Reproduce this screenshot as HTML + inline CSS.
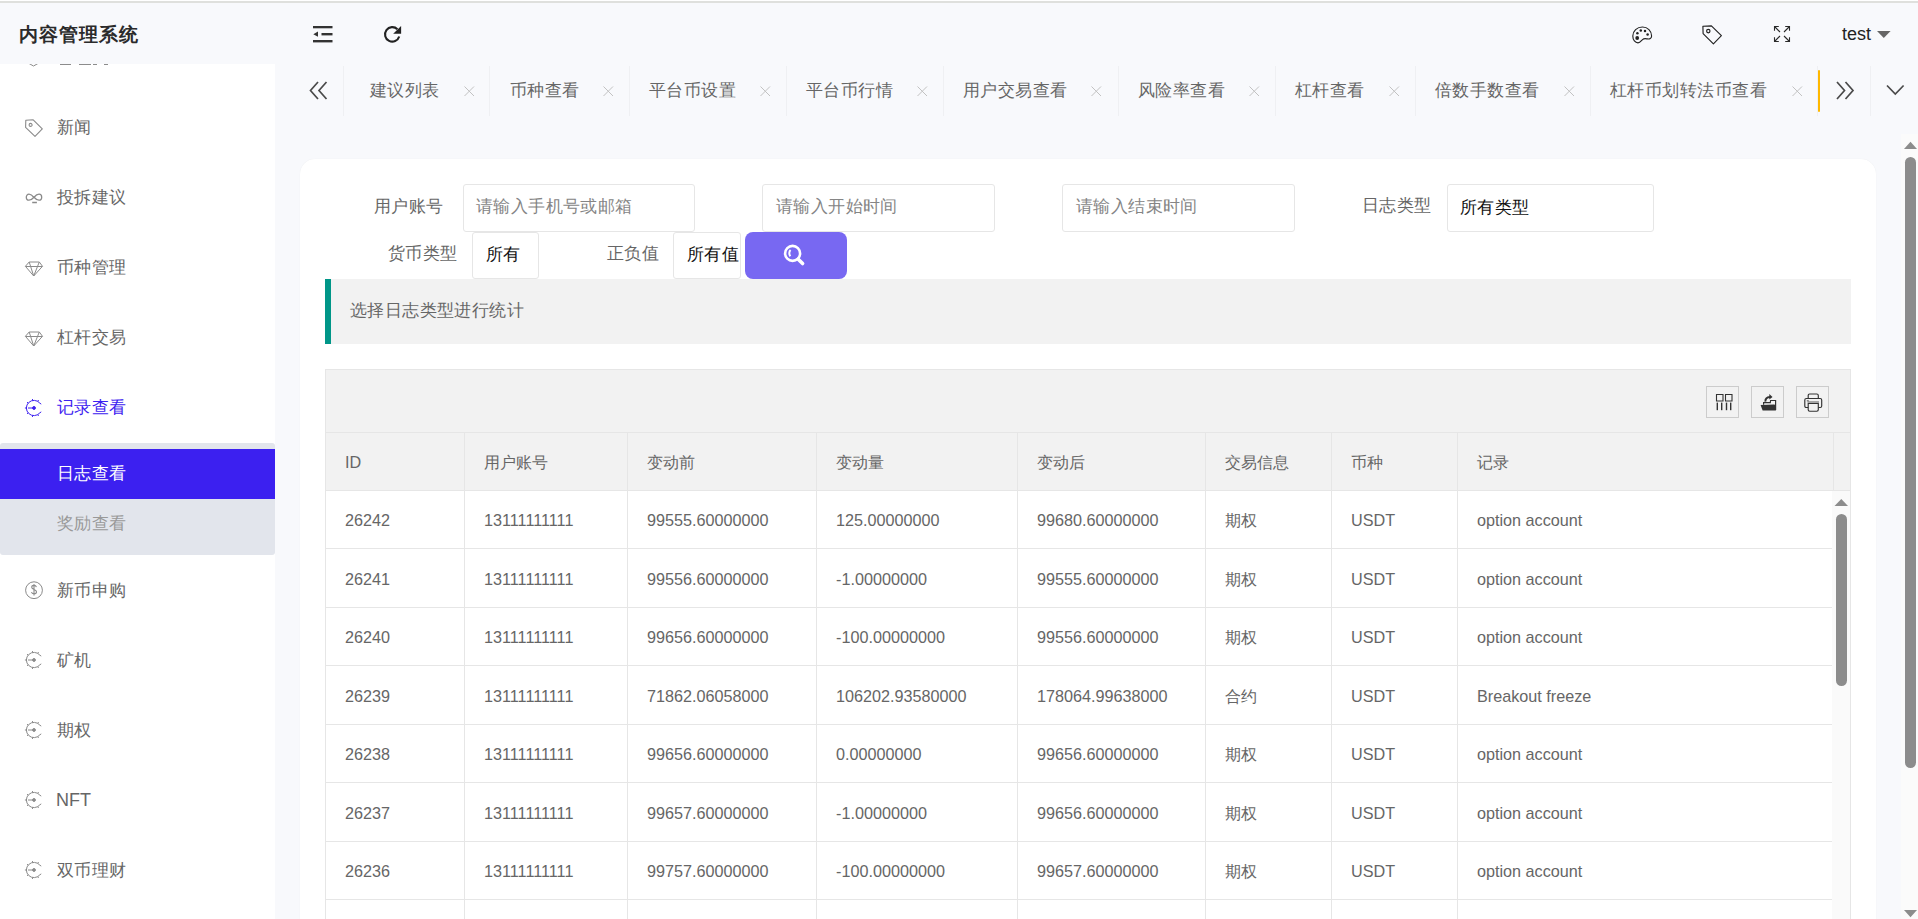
<!DOCTYPE html>
<html><head><meta charset="utf-8">
<style>
*{box-sizing:border-box;margin:0;padding:0}
html,body{width:1918px;height:919px;overflow:hidden;background:#f8f9fc;font-family:"Liberation Sans",sans-serif}
.a{position:absolute}
.t{position:absolute;white-space:nowrap;line-height:1}
svg{position:absolute;overflow:visible}
</style></head><body>
<!-- top line -->
<div class="a" style="left:0;top:0;width:1918px;height:1px;background:#fff"></div>
<div class="a" style="left:0;top:1px;width:1918px;height:2px;background:#dfe0dd"></div>
<!-- header -->
<div class="a" style="left:0;top:3px;width:1918px;height:61px;background:#f8f9fc"></div>
<div class="t" style="left:19px;top:25px;font-size:19px;letter-spacing:1px;font-weight:bold;color:#2b2b2b">内容管理系统</div>
<!-- header icons -->
<svg style="left:313px;top:26px" width="20" height="17" viewBox="0 0 20 17"><rect x="0" y="0" width="19.5" height="2.3" fill="#333"/><rect x="8.5" y="7" width="11" height="2.4" fill="#333"/><rect x="0" y="14" width="19.5" height="2.4" fill="#333"/><path d="M0.3,8.2 L5,5.6 L5,10.8 Z" fill="#333"/></svg>
<svg style="left:383px;top:25px" width="20" height="19" viewBox="0 0 20 19" fill="none"><path d="M16.23,11.52 A7.25,7.25 0 1 1 14.43,4.27" stroke="#222" stroke-width="2.1"/><path d="M18.1,0.9 L18.1,8.7 L10.2,8.7 Z" fill="#222"/></svg>
<svg style="left:1632px;top:26px" width="21" height="18" viewBox="0 0 21 18" fill="none" stroke="#222" stroke-width="1.15"><path d="M10.5,1 C5,1 0.8,4.8 0.8,10 C0.8,14.2 3.3,16.8 6,16.8 C8.2,16.8 9,15 10.5,13.6 C12,12.2 13.5,12.6 15.3,12.9 C17.6,13.3 19.6,12.6 19.6,10 C19.6,4.8 15.6,1 10.5,1 Z" stroke-linejoin="round"/><g fill="#222" stroke="none"><circle cx="5.2" cy="12" r="1.9"/><circle cx="5.4" cy="7.2" r="1.25"/><circle cx="8.8" cy="4.4" r="1.25"/><circle cx="13" cy="4.9" r="1.25"/><circle cx="15.6" cy="8.4" r="1.25"/></g></svg>
<svg style="left:1702px;top:25px" width="21" height="20" viewBox="0 0 21 20" fill="none" stroke="#222" stroke-width="1.15"><path d="M0.9,1.2 L9.4,0.9 L19.4,10.6 L11.4,18.8 L1.1,8.6 Z" stroke-linejoin="round"/><circle cx="6.3" cy="6.1" r="1.7"/></svg>
<svg style="left:1773px;top:25px" width="18" height="18" viewBox="0 0 18 18" fill="none" stroke="#2a2a2a" stroke-width="1.1"><path d="M1.5,5.8 L1.5,1.5 L5.8,1.5 M1.5,1.5 L7,7 M16.5,5.8 L16.5,1.5 L12.2,1.5 M16.5,1.5 L11,7 M1.5,12.2 L1.5,16.5 L5.8,16.5 M1.5,16.5 L7,11 M16.5,12.2 L16.5,16.5 L12.2,16.5 M16.5,16.5 L11,11"/></svg>
<div class="t" id="uname" style="left:1842px;top:25px;font-size:18px;color:#222">test</div>
<svg style="left:1877px;top:30px" width="14" height="9" viewBox="0 0 14 9"><path d="M0,1 L13.6,1 L6.8,8 Z" fill="#666"/></svg>
<!-- tabs -->
<svg style="left:309px;top:81px" width="19" height="19" viewBox="0 0 19 19" fill="none" stroke="#4a4a4a" stroke-width="1.7"><path d="M9,1 L1.5,9.5 L9,18 M17.5,1 L10,9.5 L17.5,18"/></svg>
<svg style="left:1836px;top:81px" width="19" height="19" viewBox="0 0 19 19" fill="none" stroke="#4a4a4a" stroke-width="1.7"><path d="M1,1 L8.5,9.5 L1,18 M9.5,1 L17,9.5 L9.5,18"/></svg>
<svg style="left:1886px;top:84px" width="19" height="12" viewBox="0 0 19 12" fill="none" stroke="#4a4a4a" stroke-width="1.7"><path d="M1,1.5 L9.3,10 L17.6,1.5"/></svg>
<div class="a" style="left:1818px;top:70px;width:2px;height:42px;background:#ffb800;border-radius:2px"></div>
<div class="t" style="left:370px;top:82px;font-size:17px;letter-spacing:0.45px;color:#666">建议列表</div>
<svg style="left:464px;top:86px" width="11" height="11" viewBox="0 0 11 11" fill="none" stroke="#c2c2c2" stroke-width="1"><path d="M0.5,0.5 L10,10 M10,0.5 L0.5,10"/></svg>
<div class="t" style="left:510px;top:82px;font-size:17px;letter-spacing:0.45px;color:#666">币种查看</div>
<svg style="left:603px;top:86px" width="11" height="11" viewBox="0 0 11 11" fill="none" stroke="#c2c2c2" stroke-width="1"><path d="M0.5,0.5 L10,10 M10,0.5 L0.5,10"/></svg>
<div class="t" style="left:649px;top:82px;font-size:17px;letter-spacing:0.45px;color:#666">平台币设置</div>
<svg style="left:760px;top:86px" width="11" height="11" viewBox="0 0 11 11" fill="none" stroke="#c2c2c2" stroke-width="1"><path d="M0.5,0.5 L10,10 M10,0.5 L0.5,10"/></svg>
<div class="t" style="left:806px;top:82px;font-size:17px;letter-spacing:0.45px;color:#666">平台币行情</div>
<svg style="left:917px;top:86px" width="11" height="11" viewBox="0 0 11 11" fill="none" stroke="#c2c2c2" stroke-width="1"><path d="M0.5,0.5 L10,10 M10,0.5 L0.5,10"/></svg>
<div class="t" style="left:963px;top:82px;font-size:17px;letter-spacing:0.45px;color:#666">用户交易查看</div>
<svg style="left:1091px;top:86px" width="11" height="11" viewBox="0 0 11 11" fill="none" stroke="#c2c2c2" stroke-width="1"><path d="M0.5,0.5 L10,10 M10,0.5 L0.5,10"/></svg>
<div class="t" style="left:1138px;top:82px;font-size:17px;letter-spacing:0.45px;color:#666">风险率查看</div>
<svg style="left:1249px;top:86px" width="11" height="11" viewBox="0 0 11 11" fill="none" stroke="#c2c2c2" stroke-width="1"><path d="M0.5,0.5 L10,10 M10,0.5 L0.5,10"/></svg>
<div class="t" style="left:1295px;top:82px;font-size:17px;letter-spacing:0.45px;color:#666">杠杆查看</div>
<svg style="left:1389px;top:86px" width="11" height="11" viewBox="0 0 11 11" fill="none" stroke="#c2c2c2" stroke-width="1"><path d="M0.5,0.5 L10,10 M10,0.5 L0.5,10"/></svg>
<div class="t" style="left:1435px;top:82px;font-size:17px;letter-spacing:0.45px;color:#666">倍数手数查看</div>
<svg style="left:1564px;top:86px" width="11" height="11" viewBox="0 0 11 11" fill="none" stroke="#c2c2c2" stroke-width="1"><path d="M0.5,0.5 L10,10 M10,0.5 L0.5,10"/></svg>
<div class="t" style="left:1610px;top:82px;font-size:17px;letter-spacing:0.45px;color:#666">杠杆币划转法币查看</div>
<svg style="left:1792px;top:86px" width="11" height="11" viewBox="0 0 11 11" fill="none" stroke="#c2c2c2" stroke-width="1"><path d="M0.5,0.5 L10,10 M10,0.5 L0.5,10"/></svg>
<div class="a" style="left:343px;top:66px;width:1px;height:50px;background:#eff0f3"></div>
<div class="a" style="left:489px;top:66px;width:1px;height:50px;background:#eff0f3"></div>
<div class="a" style="left:629px;top:66px;width:1px;height:50px;background:#eff0f3"></div>
<div class="a" style="left:786px;top:66px;width:1px;height:50px;background:#eff0f3"></div>
<div class="a" style="left:943px;top:66px;width:1px;height:50px;background:#eff0f3"></div>
<div class="a" style="left:1118px;top:66px;width:1px;height:50px;background:#eff0f3"></div>
<div class="a" style="left:1275px;top:66px;width:1px;height:50px;background:#eff0f3"></div>
<div class="a" style="left:1415px;top:66px;width:1px;height:50px;background:#eff0f3"></div>
<div class="a" style="left:1590px;top:66px;width:1px;height:50px;background:#eff0f3"></div>
<div class="a" style="left:1817px;top:66px;width:1px;height:50px;background:#eff0f3"></div>
<div class="a" style="left:1870px;top:66px;width:1px;height:50px;background:#eff0f3"></div>

<!-- sidebar -->
<div class="a" id="side" style="left:0;top:64px;width:275px;height:855px;background:#fff;overflow:hidden">
<div class="t" style="left:57px;top:55px;font-size:17px;letter-spacing:0.4px;color:#666">新闻</div>
<div class="t" style="left:57px;top:125px;font-size:17px;letter-spacing:0.4px;color:#666">投拆建议</div>
<div class="t" style="left:57px;top:195px;font-size:17px;letter-spacing:0.4px;color:#666">币种管理</div>
<div class="t" style="left:57px;top:265px;font-size:17px;letter-spacing:0.4px;color:#666">杠杆交易</div>
<div class="t" style="left:57px;top:335px;font-size:17px;letter-spacing:0.4px;color:#3c20f0">记录查看</div>
<div class="t" style="left:57px;top:518px;font-size:17px;letter-spacing:0.4px;color:#666">新币申购</div>
<div class="t" style="left:57px;top:588px;font-size:17px;letter-spacing:0.4px;color:#666">矿机</div>
<div class="t" style="left:57px;top:658px;font-size:17px;letter-spacing:0.4px;color:#666">期权</div>
<div class="t" style="left:56px;top:727px;font-size:18px;color:#666">NFT</div>
<div class="t" style="left:57px;top:798px;font-size:17px;letter-spacing:0.4px;color:#666">双币理财</div>
<svg style="left:25px;top:55px" width="18" height="18" viewBox="0 0 18 18" fill="none" stroke="#8a8a8a" stroke-width="1.1"><path d="M0.8,1.3 L8.2,0.8 L17.3,9.9 L10,17.3 L0.6,8.4 Z" stroke-linejoin="round"/><circle cx="5.6" cy="5.9" r="1.5"/></svg>
<svg style="left:25px;top:129px" width="18" height="12" viewBox="0 0 18 12" fill="none" stroke="#8a8a8a" stroke-width="1.3"><path d="M9,4.5 C7,2 5.5,1.2 4,1.2 C2.3,1.2 1.3,2.6 1.3,4.2 C1.3,5.8 2.3,7.2 4,7.2 C5.5,7.2 7,6.4 9,4.2 C11,2 12.5,1.2 14,1.2 C15.7,1.2 16.7,2.6 16.7,4.2 C16.7,5.8 15.7,7.2 14,7.2 C12.5,7.2 11,6.4 9,4.2"/><line x1="7.2" y1="9.5" x2="11.9" y2="9.5" stroke-width="1.5"/></svg>
<svg style="left:25px;top:197px" width="18" height="16" viewBox="0 0 18 16" fill="none" stroke="#8a8a8a" stroke-width="1"><path d="M4.2,1 L14.3,1 L17.5,5.3 L8.7,15 L0.4,5.3 Z M0.6,5.5 L17.3,5.5 M4.2,1 L8.7,15 L14.3,1" stroke-linejoin="round"/></svg>
<svg style="left:25px;top:267px" width="18" height="16" viewBox="0 0 18 16" fill="none" stroke="#8a8a8a" stroke-width="1"><path d="M4.2,1 L14.3,1 L17.5,5.3 L8.7,15 L0.4,5.3 Z M0.6,5.5 L17.3,5.5 M4.2,1 L8.7,15 L14.3,1" stroke-linejoin="round"/></svg>
<svg style="left:25px;top:335px" width="18" height="18" viewBox="0 0 18 18" fill="none" stroke="#3c20f0" stroke-width="1"><path d="M14.82,4.11 A7.6,7.6 0 1 0 14.82,13.89"/><line x1="14.82" y1="4.11" x2="16.22" y2="5.11"/><line x1="14.82" y1="13.89" x2="16.22" y2="12.89"/><line x1="12.70" y1="15.41" x2="13.55" y2="16.88"/><line x1="7.72" y1="16.29" x2="7.42" y2="17.96"/><line x1="3.33" y1="13.76" x2="2.03" y2="14.85"/><line x1="1.60" y1="9.00" x2="-0.10" y2="9.00"/><line x1="3.33" y1="4.24" x2="2.03" y2="3.15"/><line x1="7.72" y1="1.71" x2="7.42" y2="0.04"/><line x1="12.70" y1="2.59" x2="13.55" y2="1.12"/><line x1="3" y1="9" x2="9" y2="9"/><circle cx="9" cy="9" r="1.4" fill="#3c20f0"/></svg>
<svg style="left:25px;top:587px" width="18" height="18" viewBox="0 0 18 18" fill="none" stroke="#8a8a8a" stroke-width="1"><path d="M14.82,4.11 A7.6,7.6 0 1 0 14.82,13.89"/><line x1="14.82" y1="4.11" x2="16.22" y2="5.11"/><line x1="14.82" y1="13.89" x2="16.22" y2="12.89"/><line x1="12.70" y1="15.41" x2="13.55" y2="16.88"/><line x1="7.72" y1="16.29" x2="7.42" y2="17.96"/><line x1="3.33" y1="13.76" x2="2.03" y2="14.85"/><line x1="1.60" y1="9.00" x2="-0.10" y2="9.00"/><line x1="3.33" y1="4.24" x2="2.03" y2="3.15"/><line x1="7.72" y1="1.71" x2="7.42" y2="0.04"/><line x1="12.70" y1="2.59" x2="13.55" y2="1.12"/><line x1="3" y1="9" x2="9" y2="9"/><circle cx="9" cy="9" r="1.4" fill="#8a8a8a"/></svg>
<svg style="left:25px;top:657px" width="18" height="18" viewBox="0 0 18 18" fill="none" stroke="#8a8a8a" stroke-width="1"><path d="M14.82,4.11 A7.6,7.6 0 1 0 14.82,13.89"/><line x1="14.82" y1="4.11" x2="16.22" y2="5.11"/><line x1="14.82" y1="13.89" x2="16.22" y2="12.89"/><line x1="12.70" y1="15.41" x2="13.55" y2="16.88"/><line x1="7.72" y1="16.29" x2="7.42" y2="17.96"/><line x1="3.33" y1="13.76" x2="2.03" y2="14.85"/><line x1="1.60" y1="9.00" x2="-0.10" y2="9.00"/><line x1="3.33" y1="4.24" x2="2.03" y2="3.15"/><line x1="7.72" y1="1.71" x2="7.42" y2="0.04"/><line x1="12.70" y1="2.59" x2="13.55" y2="1.12"/><line x1="3" y1="9" x2="9" y2="9"/><circle cx="9" cy="9" r="1.4" fill="#8a8a8a"/></svg>
<svg style="left:25px;top:727px" width="18" height="18" viewBox="0 0 18 18" fill="none" stroke="#8a8a8a" stroke-width="1"><path d="M14.82,4.11 A7.6,7.6 0 1 0 14.82,13.89"/><line x1="14.82" y1="4.11" x2="16.22" y2="5.11"/><line x1="14.82" y1="13.89" x2="16.22" y2="12.89"/><line x1="12.70" y1="15.41" x2="13.55" y2="16.88"/><line x1="7.72" y1="16.29" x2="7.42" y2="17.96"/><line x1="3.33" y1="13.76" x2="2.03" y2="14.85"/><line x1="1.60" y1="9.00" x2="-0.10" y2="9.00"/><line x1="3.33" y1="4.24" x2="2.03" y2="3.15"/><line x1="7.72" y1="1.71" x2="7.42" y2="0.04"/><line x1="12.70" y1="2.59" x2="13.55" y2="1.12"/><line x1="3" y1="9" x2="9" y2="9"/><circle cx="9" cy="9" r="1.4" fill="#8a8a8a"/></svg>
<svg style="left:25px;top:797px" width="18" height="18" viewBox="0 0 18 18" fill="none" stroke="#8a8a8a" stroke-width="1"><path d="M14.82,4.11 A7.6,7.6 0 1 0 14.82,13.89"/><line x1="14.82" y1="4.11" x2="16.22" y2="5.11"/><line x1="14.82" y1="13.89" x2="16.22" y2="12.89"/><line x1="12.70" y1="15.41" x2="13.55" y2="16.88"/><line x1="7.72" y1="16.29" x2="7.42" y2="17.96"/><line x1="3.33" y1="13.76" x2="2.03" y2="14.85"/><line x1="1.60" y1="9.00" x2="-0.10" y2="9.00"/><line x1="3.33" y1="4.24" x2="2.03" y2="3.15"/><line x1="7.72" y1="1.71" x2="7.42" y2="0.04"/><line x1="12.70" y1="2.59" x2="13.55" y2="1.12"/><line x1="3" y1="9" x2="9" y2="9"/><circle cx="9" cy="9" r="1.4" fill="#8a8a8a"/></svg>
<svg style="left:25px;top:517px" width="18" height="18" viewBox="0 0 18 18" fill="none" stroke="#8a8a8a" stroke-width="1"><circle cx="9" cy="9.2" r="8.4"/><path d="M11.4,6.2 C11,4.8 10,4.4 9,4.4 C7.6,4.4 6.7,5.2 6.7,6.3 C6.7,8.8 11.5,8 11.5,10.8 C11.5,12 10.5,12.9 9,12.9 C7.8,12.9 6.8,12.3 6.5,11 M9,3 L9,14.6" stroke-width="1.1"/></svg>
<svg style="left:27px;top:-4px" width="13" height="7" viewBox="0 0 13 7" fill="none" stroke="#8a8a8a" stroke-width="1"><path d="M1.5,3.2 L6.5,6 L11.5,3.2"/></svg>
<div class="a" style="left:60px;top:0;width:11px;height:1px;background:#8c8c8c"></div><div class="a" style="left:79px;top:0;width:12px;height:1px;background:#8c8c8c"></div><div class="a" style="left:93px;top:0;width:4px;height:1px;background:#8c8c8c"></div><div class="a" style="left:104px;top:0;width:4px;height:1px;background:#8c8c8c"></div>
<div class="a" style="left:0;top:379px;width:275px;height:112px;background:#e2e5ec;border-radius:3px"></div>
<div class="a" style="left:0;top:385px;width:275px;height:50px;background:#3c20f0"></div>
<div class="t" style="left:57px;top:401px;font-size:17px;letter-spacing:0.4px;color:#fff">日志查看</div>
<div class="t" style="left:57px;top:451px;font-size:17px;letter-spacing:0.4px;color:#999">奖励查看</div>
</div>

<!-- content card -->
<div class="a" style="left:300px;top:159px;width:1576px;height:800px;background:#fff;border-radius:15px;box-shadow:0 0 1px rgba(0,0,0,0.08)"></div>
<div class="t" style="left:374px;top:198px;font-size:17px;letter-spacing:0.4px;color:#666;">用户账号</div>
<div class="a" style="left:463px;top:184px;width:232px;height:48px;border:1px solid #e6e6e6;border-radius:3px;background:#fff"></div>
<div class="t" style="left:476px;top:198px;font-size:17px;letter-spacing:0.4px;color:#858585;">请输入手机号或邮箱</div>
<div class="a" style="left:762px;top:184px;width:233px;height:48px;border:1px solid #e6e6e6;border-radius:3px;background:#fff"></div>
<div class="t" style="left:776px;top:198px;font-size:17px;letter-spacing:0.4px;color:#858585;">请输入开始时间</div>
<div class="a" style="left:1062px;top:184px;width:233px;height:48px;border:1px solid #e6e6e6;border-radius:3px;background:#fff"></div>
<div class="t" style="left:1076px;top:198px;font-size:17px;letter-spacing:0.4px;color:#858585;">请输入结束时间</div>
<div class="t" style="left:1362px;top:197px;font-size:17px;letter-spacing:0.4px;color:#666;">日志类型</div>
<div class="a" style="left:1447px;top:184px;width:207px;height:48px;border:1px solid #e6e6e6;border-radius:3px;background:#fff"></div>
<div class="t" style="left:1460px;top:199px;font-size:17px;letter-spacing:0.4px;color:#111;">所有类型</div>
<div class="t" style="left:388px;top:245px;font-size:17px;letter-spacing:0.4px;color:#666;">货币类型</div>
<div class="a" style="left:472px;top:232px;width:67px;height:47px;border:1px solid #e6e6e6;border-radius:3px;background:#fff"></div>
<div class="t" style="left:486px;top:246px;font-size:17px;letter-spacing:0.4px;color:#111;">所有</div>
<div class="t" style="left:607px;top:245px;font-size:17px;letter-spacing:0.4px;color:#666;">正负值</div>
<div class="a" style="left:673px;top:232px;width:68px;height:47px;border:1px solid #e6e6e6;border-radius:3px;background:#fff;overflow:hidden"><div class="t" style="left:13px;top:13px;font-size:17px;letter-spacing:0.4px;color:#111">所有值</div></div>
<div class="a" style="left:745px;top:232px;width:102px;height:47px;background:#7868f2;border-radius:8px"></div>
<svg style="left:782px;top:244px" width="24" height="23" viewBox="0 0 24 23" fill="none" stroke="#fff"><circle cx="10.6" cy="9.4" r="7.5" stroke-width="2.6"/><path d="M16.2,15.2 L20.6,19.6" stroke-width="3.6" stroke-linecap="round"/><path d="M8.6,6 C6.9,7.4 6.9,10.6 8.4,12.2" stroke-width="2"/></svg>
<div class="a" style="left:325px;top:279px;width:1526px;height:65px;background:#f2f2f2;border-left:6px solid #009688"></div>
<div class="t" style="left:350px;top:302px;font-size:17px;letter-spacing:0.4px;color:#666;">选择日志类型进行统计</div>
<div class="a" style="left:325px;top:369px;width:1526px;height:600px;border:1px solid #e6e6e6;background:#fff"></div>
<div class="a" style="left:326px;top:370px;width:1524px;height:62px;background:#f2f2f2"></div>
<div class="a" style="left:326px;top:432px;width:1524px;height:1px;background:#e6e6e6"></div>
<div class="a" style="left:326px;top:433px;width:1524px;height:57px;background:#f2f2f2"></div>
<div class="a" style="left:326px;top:490px;width:1524px;height:1px;background:#e6e6e6"></div>
<div class="a" style="left:1832px;top:491px;width:18px;height:428px;background:#fafafa"></div>
<div class="a" style="left:464px;top:433px;width:1px;height:57px;background:#e6e6e6"></div>
<div class="a" style="left:627px;top:433px;width:1px;height:57px;background:#e6e6e6"></div>
<div class="a" style="left:816px;top:433px;width:1px;height:57px;background:#e6e6e6"></div>
<div class="a" style="left:1017px;top:433px;width:1px;height:57px;background:#e6e6e6"></div>
<div class="a" style="left:1205px;top:433px;width:1px;height:57px;background:#e6e6e6"></div>
<div class="a" style="left:1331px;top:433px;width:1px;height:57px;background:#e6e6e6"></div>
<div class="a" style="left:1457px;top:433px;width:1px;height:57px;background:#e6e6e6"></div>
<div class="a" style="left:1833px;top:433px;width:1px;height:57px;background:#e6e6e6"></div>
<div class="a" style="left:464px;top:491px;width:1px;height:428px;background:#e6e6e6"></div>
<div class="a" style="left:627px;top:491px;width:1px;height:428px;background:#e6e6e6"></div>
<div class="a" style="left:816px;top:491px;width:1px;height:428px;background:#e6e6e6"></div>
<div class="a" style="left:1017px;top:491px;width:1px;height:428px;background:#e6e6e6"></div>
<div class="a" style="left:1205px;top:491px;width:1px;height:428px;background:#e6e6e6"></div>
<div class="a" style="left:1331px;top:491px;width:1px;height:428px;background:#e6e6e6"></div>
<div class="a" style="left:1457px;top:491px;width:1px;height:428px;background:#e6e6e6"></div>
<div class="a" style="left:326px;top:548px;width:1506px;height:1px;background:#e6e6e6"></div>
<div class="a" style="left:326px;top:607px;width:1506px;height:1px;background:#e6e6e6"></div>
<div class="a" style="left:326px;top:665px;width:1506px;height:1px;background:#e6e6e6"></div>
<div class="a" style="left:326px;top:724px;width:1506px;height:1px;background:#e6e6e6"></div>
<div class="a" style="left:326px;top:782px;width:1506px;height:1px;background:#e6e6e6"></div>
<div class="a" style="left:326px;top:841px;width:1506px;height:1px;background:#e6e6e6"></div>
<div class="a" style="left:326px;top:899px;width:1506px;height:1px;background:#e6e6e6"></div>
<div class="t" style="left:345px;top:454px;font-size:16.2px;color:#666;">ID</div>
<div class="t" style="left:484px;top:454px;font-size:16.2px;color:#666;">用户账号</div>
<div class="t" style="left:647px;top:454px;font-size:16.2px;color:#666;">变动前</div>
<div class="t" style="left:836px;top:454px;font-size:16.2px;color:#666;">变动量</div>
<div class="t" style="left:1037px;top:454px;font-size:16.2px;color:#666;">变动后</div>
<div class="t" style="left:1225px;top:454px;font-size:16.2px;color:#666;">交易信息</div>
<div class="t" style="left:1351px;top:454px;font-size:16.2px;color:#666;">币种</div>
<div class="t" style="left:1477px;top:454px;font-size:16.2px;color:#666;">记录</div>
<div class="t" style="left:345px;top:512px;font-size:16.2px;color:#666;">26242</div>
<div class="t" style="left:484px;top:512px;font-size:16.2px;color:#666;">13111111111</div>
<div class="t" style="left:647px;top:512px;font-size:16.2px;color:#666;">99555.60000000</div>
<div class="t" style="left:836px;top:512px;font-size:16.2px;color:#666;">125.00000000</div>
<div class="t" style="left:1037px;top:512px;font-size:16.2px;color:#666;">99680.60000000</div>
<div class="t" style="left:1225px;top:512px;font-size:16.2px;color:#666;">期权</div>
<div class="t" style="left:1351px;top:512px;font-size:16.2px;color:#666;">USDT</div>
<div class="t" style="left:1477px;top:512px;font-size:16.2px;color:#666;">option account</div>
<div class="t" style="left:345px;top:571px;font-size:16.2px;color:#666;">26241</div>
<div class="t" style="left:484px;top:571px;font-size:16.2px;color:#666;">13111111111</div>
<div class="t" style="left:647px;top:571px;font-size:16.2px;color:#666;">99556.60000000</div>
<div class="t" style="left:836px;top:571px;font-size:16.2px;color:#666;">-1.00000000</div>
<div class="t" style="left:1037px;top:571px;font-size:16.2px;color:#666;">99555.60000000</div>
<div class="t" style="left:1225px;top:571px;font-size:16.2px;color:#666;">期权</div>
<div class="t" style="left:1351px;top:571px;font-size:16.2px;color:#666;">USDT</div>
<div class="t" style="left:1477px;top:571px;font-size:16.2px;color:#666;">option account</div>
<div class="t" style="left:345px;top:629px;font-size:16.2px;color:#666;">26240</div>
<div class="t" style="left:484px;top:629px;font-size:16.2px;color:#666;">13111111111</div>
<div class="t" style="left:647px;top:629px;font-size:16.2px;color:#666;">99656.60000000</div>
<div class="t" style="left:836px;top:629px;font-size:16.2px;color:#666;">-100.00000000</div>
<div class="t" style="left:1037px;top:629px;font-size:16.2px;color:#666;">99556.60000000</div>
<div class="t" style="left:1225px;top:629px;font-size:16.2px;color:#666;">期权</div>
<div class="t" style="left:1351px;top:629px;font-size:16.2px;color:#666;">USDT</div>
<div class="t" style="left:1477px;top:629px;font-size:16.2px;color:#666;">option account</div>
<div class="t" style="left:345px;top:688px;font-size:16.2px;color:#666;">26239</div>
<div class="t" style="left:484px;top:688px;font-size:16.2px;color:#666;">13111111111</div>
<div class="t" style="left:647px;top:688px;font-size:16.2px;color:#666;">71862.06058000</div>
<div class="t" style="left:836px;top:688px;font-size:16.2px;color:#666;">106202.93580000</div>
<div class="t" style="left:1037px;top:688px;font-size:16.2px;color:#666;">178064.99638000</div>
<div class="t" style="left:1225px;top:688px;font-size:16.2px;color:#666;">合约</div>
<div class="t" style="left:1351px;top:688px;font-size:16.2px;color:#666;">USDT</div>
<div class="t" style="left:1477px;top:688px;font-size:16.2px;color:#666;">Breakout freeze</div>
<div class="t" style="left:345px;top:746px;font-size:16.2px;color:#666;">26238</div>
<div class="t" style="left:484px;top:746px;font-size:16.2px;color:#666;">13111111111</div>
<div class="t" style="left:647px;top:746px;font-size:16.2px;color:#666;">99656.60000000</div>
<div class="t" style="left:836px;top:746px;font-size:16.2px;color:#666;">0.00000000</div>
<div class="t" style="left:1037px;top:746px;font-size:16.2px;color:#666;">99656.60000000</div>
<div class="t" style="left:1225px;top:746px;font-size:16.2px;color:#666;">期权</div>
<div class="t" style="left:1351px;top:746px;font-size:16.2px;color:#666;">USDT</div>
<div class="t" style="left:1477px;top:746px;font-size:16.2px;color:#666;">option account</div>
<div class="t" style="left:345px;top:805px;font-size:16.2px;color:#666;">26237</div>
<div class="t" style="left:484px;top:805px;font-size:16.2px;color:#666;">13111111111</div>
<div class="t" style="left:647px;top:805px;font-size:16.2px;color:#666;">99657.60000000</div>
<div class="t" style="left:836px;top:805px;font-size:16.2px;color:#666;">-1.00000000</div>
<div class="t" style="left:1037px;top:805px;font-size:16.2px;color:#666;">99656.60000000</div>
<div class="t" style="left:1225px;top:805px;font-size:16.2px;color:#666;">期权</div>
<div class="t" style="left:1351px;top:805px;font-size:16.2px;color:#666;">USDT</div>
<div class="t" style="left:1477px;top:805px;font-size:16.2px;color:#666;">option account</div>
<div class="t" style="left:345px;top:863px;font-size:16.2px;color:#666;">26236</div>
<div class="t" style="left:484px;top:863px;font-size:16.2px;color:#666;">13111111111</div>
<div class="t" style="left:647px;top:863px;font-size:16.2px;color:#666;">99757.60000000</div>
<div class="t" style="left:836px;top:863px;font-size:16.2px;color:#666;">-100.00000000</div>
<div class="t" style="left:1037px;top:863px;font-size:16.2px;color:#666;">99657.60000000</div>
<div class="t" style="left:1225px;top:863px;font-size:16.2px;color:#666;">期权</div>
<div class="t" style="left:1351px;top:863px;font-size:16.2px;color:#666;">USDT</div>
<div class="t" style="left:1477px;top:863px;font-size:16.2px;color:#666;">option account</div>
<svg style="left:1834px;top:498px" width="15" height="9" viewBox="0 0 15 9"><path d="M0.5,8 L7.3,1 L14,8 Z" fill="#8c8c8c"/></svg>
<div class="a" style="left:1836px;top:514px;width:11px;height:172px;background:#8c8c8c;border-radius:6px"></div>
<div class="a" style="left:1706px;top:386px;width:33px;height:32px;border:1px solid #ccc"></div>
<div class="a" style="left:1751px;top:386px;width:33px;height:32px;border:1px solid #ccc"></div>
<div class="a" style="left:1796px;top:386px;width:33px;height:32px;border:1px solid #ccc"></div>
<svg style="left:1716px;top:394px" width="17" height="17" viewBox="0 0 17 17" fill="#333"><path d="M0.5,0.5 h6.5 v6.5 h-6.5 Z M9.5,0.5 h6.5 v6.5 h-6.5 Z" fill="none" stroke="#333" stroke-width="1.1"/><rect x="0.6" y="8.6" width="1.4" height="7.6"/><rect x="5" y="8.6" width="1.4" height="7.6"/><rect x="9.8" y="8.6" width="1.4" height="7.6"/><rect x="14" y="8.6" width="1.4" height="7.6"/></svg>
<svg style="left:1760px;top:393px" width="18" height="19" viewBox="0 0 18 19"><path d="M3.6,11.8 L3.6,9.6 L10.3,9.6 L10.6,7.5 L15.6,7.5 L15.6,17" fill="none" stroke="#333" stroke-width="1.2"/><path d="M0.6,12 L14.2,11.6 L15.9,12.2 L15.9,17.6 L2.6,17.6 Z" fill="#333"/><path d="M5.4,8.6 C5.2,6 6.9,4.3 10,4" fill="none" stroke="#333" stroke-width="1.9"/><path d="M9.3,0.9 L12.5,3.9 L9.3,6.6 Z" fill="#333"/></svg>
<svg style="left:1804px;top:393px" width="19" height="19" viewBox="0 0 19 19" fill="none" stroke="#333" stroke-width="1.15"><path d="M4.2,5.5 V2.5 Q4.2,1 5.7,1 H12.8 Q14.3,1 14.3,2.5 V5.5"/><path d="M4.2,14.5 H2.3 Q0.8,14.5 0.8,13 V7 Q0.8,5.5 2.3,5.5 H16.2 Q17.7,5.5 17.7,7 V13 Q17.7,14.5 16.2,14.5 H14.3"/><path d="M4.2,10.5 H14.3 V16.8 Q14.3,18.2 12.8,18.2 H5.7 Q4.2,18.2 4.2,16.8 Z"/><path d="M2.8,7.8 H4.8" stroke-width="0.8"/><path d="M3.5,9 H15" stroke-width="0.8"/></svg>
<!-- page scrollbar -->
<div class="a" style="left:1901px;top:134px;width:17px;height:785px;background:#fbfbfb"></div>
<svg style="left:1904px;top:141px" width="14" height="9" viewBox="0 0 14 9"><path d="M0,8 L6.5,0.8 L13,8 Z" fill="#8c8c8c"/></svg>
<div class="a" style="left:1905px;top:157px;width:11px;height:611px;background:#8c8c8c;border-radius:6px"></div>
<svg style="left:1904px;top:909px" width="14" height="9" viewBox="0 0 14 9"><path d="M0,1 L13,1 L6.5,8.2 Z" fill="#8c8c8c"/></svg>
</body></html>
